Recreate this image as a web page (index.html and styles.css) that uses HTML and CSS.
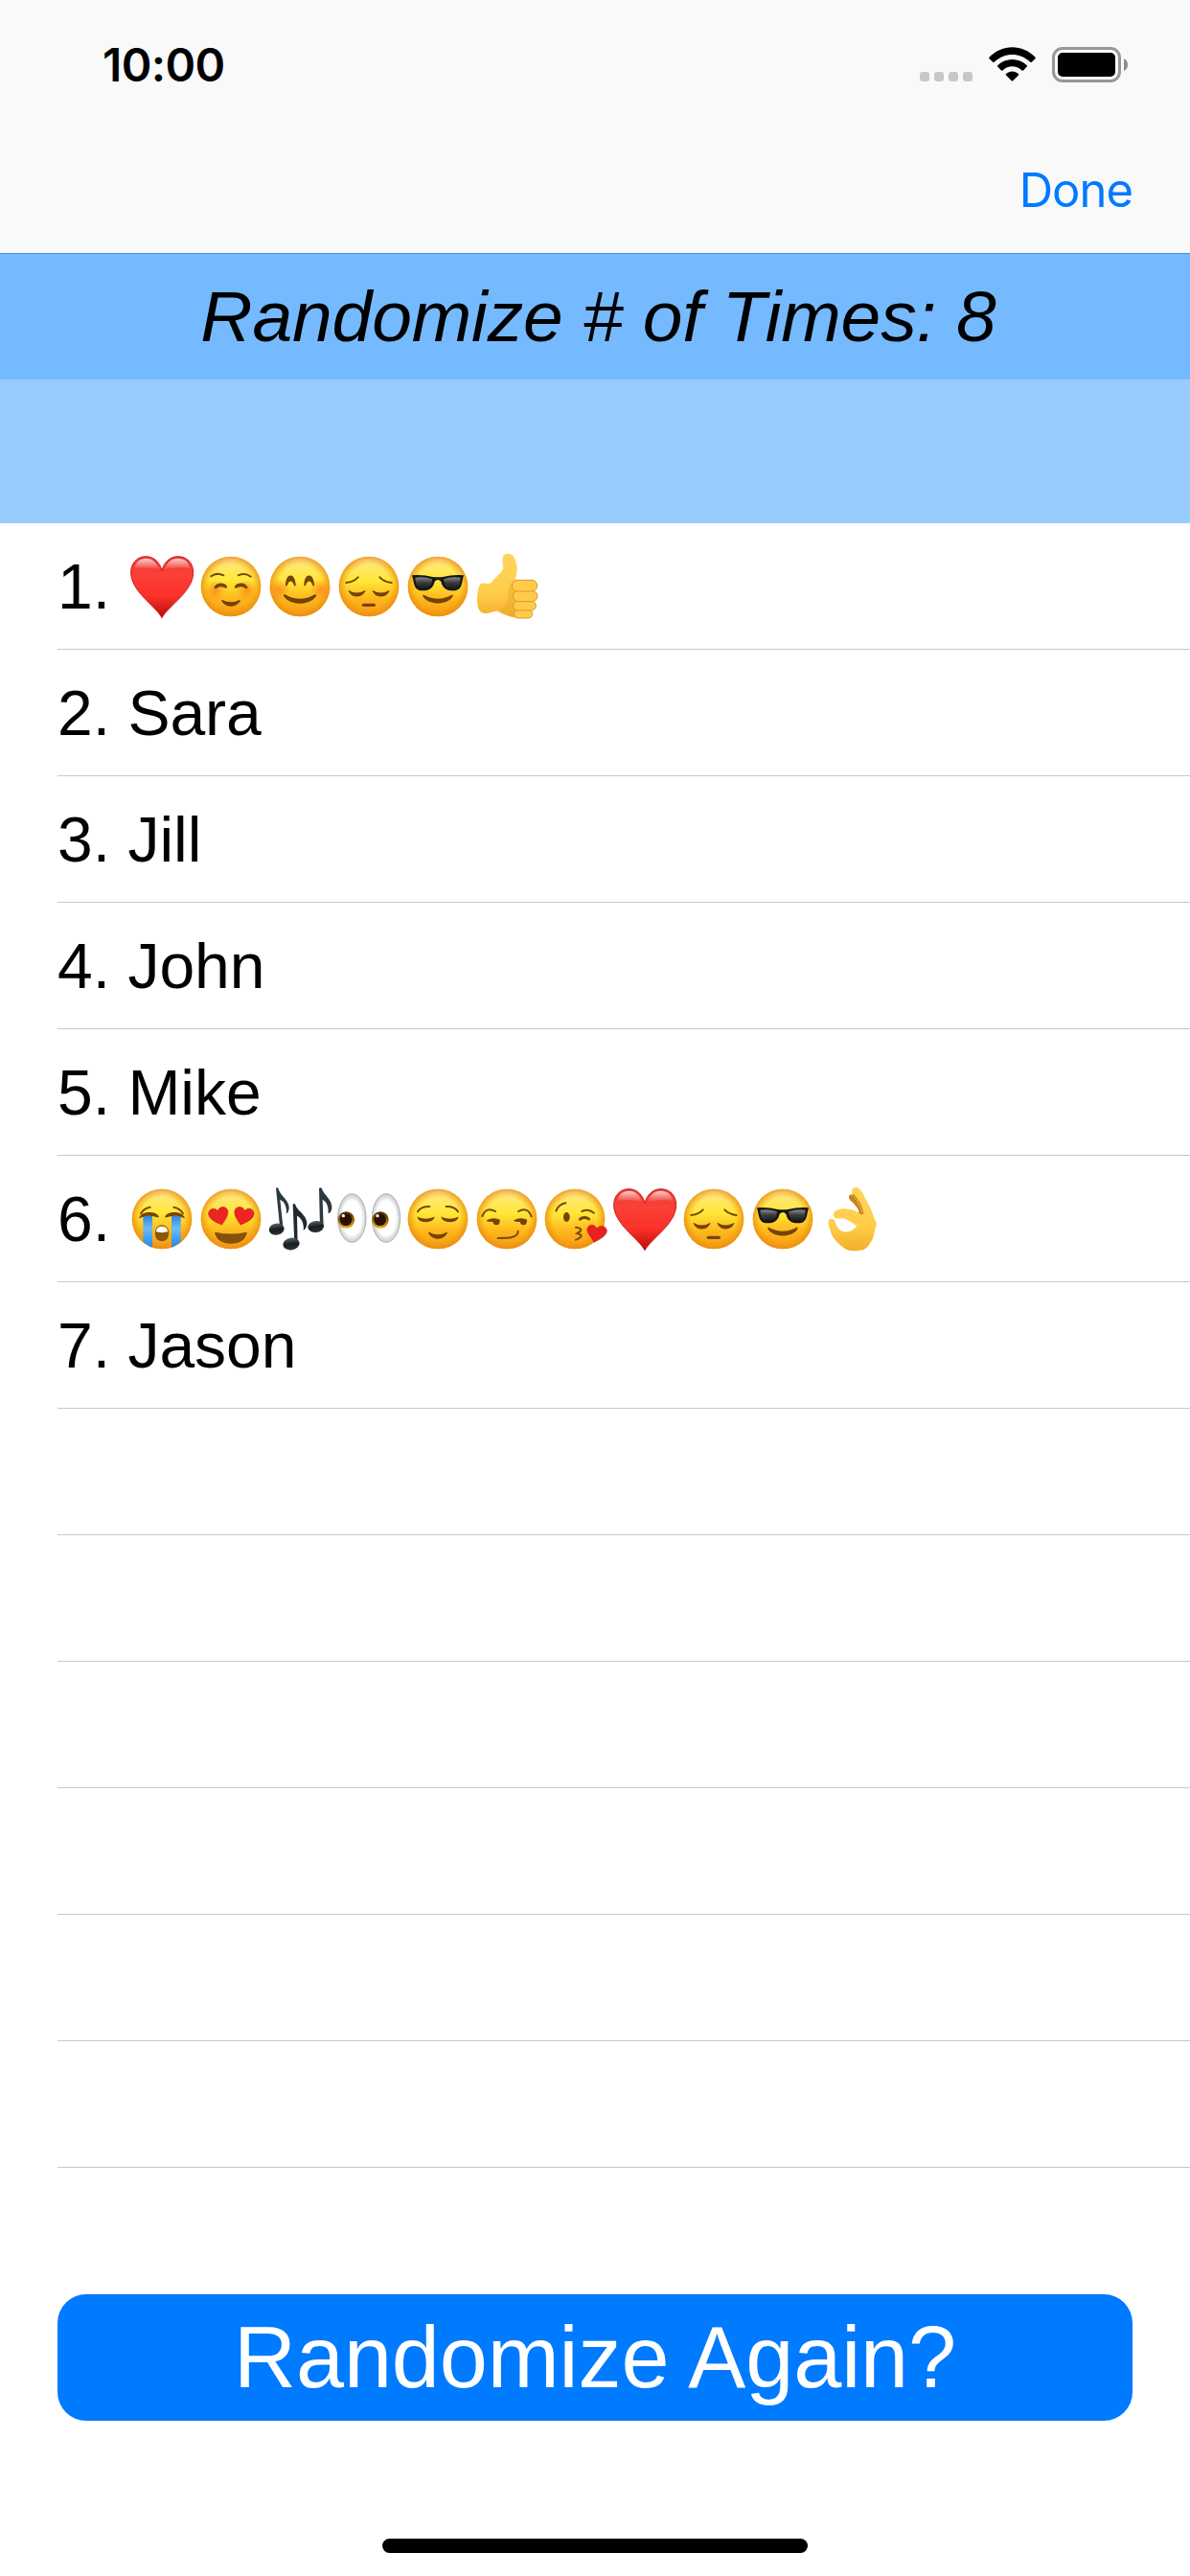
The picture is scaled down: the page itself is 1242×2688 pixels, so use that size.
FILE: index.html
```html
<!DOCTYPE html>
<html lang="en">

<head>
    <meta charset="UTF-8">
    <meta name="viewport" content="width=device-width, initial-scale=1.0">
    <title>Randomize</title>
    <link rel="stylesheet" href="styles.css">
</head>

<body>
    <!-- shared emoji shapes -->
    <svg class="defs" width="0" height="0">
        <defs>
            <linearGradient id="faceFill" x1="0" y1="0" x2="0" y2="1">
                <stop offset="0" stop-color="#fff6c0" />
                <stop offset="0.14" stop-color="#ffe870" />
                <stop offset="0.4" stop-color="#ffe838" />
                <stop offset="0.7" stop-color="#fdb81c" />
                <stop offset="1" stop-color="#f69a16" />
            </linearGradient>
            <radialGradient id="faceEdge">
                <stop offset="0.72" stop-color="#f39a12" stop-opacity="0" />
                <stop offset="1" stop-color="#e98a10" stop-opacity="0.8" />
            </radialGradient>
            <radialGradient id="cheek">
                <stop offset="0" stop-color="#ff7a1a" stop-opacity="0.75" />
                <stop offset="1" stop-color="#ff8a1a" stop-opacity="0" />
            </radialGradient>
            <linearGradient id="heartFill" x1="0" y1="0" x2="0" y2="1">
                <stop offset="0" stop-color="#ea3a34" />
                <stop offset="0.3" stop-color="#fb4038" />
                <stop offset="0.65" stop-color="#fb3128" />
                <stop offset="1" stop-color="#b80a0a" />
            </linearGradient>
            <linearGradient id="shine" x1="0" y1="0" x2="0" y2="1">
                <stop offset="0" stop-color="#fff" stop-opacity="0.75" />
                <stop offset="1" stop-color="#fff" stop-opacity="0" />
            </linearGradient>
            <linearGradient id="handFill" x1="0" y1="0" x2="0" y2="1">
                <stop offset="0" stop-color="#ffd45c" />
                <stop offset="0.6" stop-color="#ffcd4a" />
                <stop offset="1" stop-color="#f3ae2a" />
            </linearGradient>
            <linearGradient id="tear" x1="0" y1="0" x2="0" y2="1">
                <stop offset="0" stop-color="#2f86dc" />
                <stop offset="0.4" stop-color="#6cbcf5" />
                <stop offset="1" stop-color="#2585ec" />
            </linearGradient>
            <linearGradient id="lens" x1="0" y1="0" x2="0" y2="1">
                <stop offset="0" stop-color="#8a8a8a" />
                <stop offset="0.45" stop-color="#3c3c3c" />
                <stop offset="1" stop-color="#161616" />
            </linearGradient>
            <radialGradient id="eyeball">
                <stop offset="0.7" stop-color="#fff" />
                <stop offset="1" stop-color="#c9c9cb" />
            </radialGradient>
            <linearGradient id="iris" x1="0" y1="0" x2="0" y2="1">
                <stop offset="0" stop-color="#4a2800" />
                <stop offset="0.5" stop-color="#9a6206" />
                <stop offset="1" stop-color="#e9b414" />
            </linearGradient>
            <linearGradient id="noteHead" x1="0" y1="0" x2="0" y2="1">
                <stop offset="0" stop-color="#56656c" />
                <stop offset="0.5" stop-color="#171c1f" />
                <stop offset="1" stop-color="#2c363b" />
            </linearGradient>

            <symbol id="face" viewBox="0 0 216 216">
                <circle cx="108" cy="108" r="94" fill="url(#faceFill)" />
                <circle cx="108" cy="108" r="94" fill="url(#faceEdge)" />
            </symbol>

            <symbol id="heart" viewBox="0 0 216 216">
                <path d="M108 206C88 168 11 124 11 64C11 34 31 14 58 14C84 14 102 34 108 58C114 34 132 14 158 14C186 14 206 34 206 64C206 124 128 168 108 206Z" fill="url(#heartFill)" stroke="#c91a18" stroke-width="3" />
                <path d="M22 52C26 30 40 20 58 20C78 20 94 34 100 56C76 48 44 46 22 52Z" fill="url(#shine)" />
                <path d="M116 56C122 34 138 20 158 20C178 20 192 30 196 52C172 46 140 48 116 56Z" fill="url(#shine)" />
            </symbol>

            <symbol id="blush" viewBox="0 0 216 216">
                <use href="#face" width="216" height="216" />
                <circle cx="58" cy="120" r="34" fill="url(#cheek)" />
                <circle cx="158" cy="120" r="34" fill="url(#cheek)" />
                <g class="line">
                    <path d="M46 76Q62 63 85 73" />
                    <path d="M131 73Q153 63 170 77" />
                </g>
                <path class="ink" d="M56 110C62 94 92 94 96 109C97 114 93 114 88 112C80 108 72 108 64 113C58 116 55 114 56 110Z" />
                <path class="ink" d="M160 110C154 94 124 94 120 109C119 114 123 114 128 112C136 108 144 108 152 113C158 116 161 114 160 110Z" />
                <path class="ink" d="M81 150Q108 164 135 150C138 149 138 153 136 156C122 175 94 175 80 156C78 153 78 149 81 150Z" />
            </symbol>

            <symbol id="smile" viewBox="0 0 216 216">
                <use href="#face" width="216" height="216" />
                <circle cx="42" cy="118" r="36" fill="url(#cheek)" />
                <circle cx="174" cy="118" r="36" fill="url(#cheek)" />
                <path class="ink" d="M63 103C64 64 93 64 95 103C95 109 91 108 89 103C84 88 74 88 69 103C67 108 63 108 63 103Z" />
                <path class="ink" d="M121 103C122 64 151 64 153 103C153 109 149 108 147 103C142 88 132 88 127 103C125 108 121 108 121 103Z" />
                <path class="ink" d="M61 133Q108 160 155 133C160 131 160 137 157 141C136 168 80 168 59 141C56 137 56 131 61 133Z" />
            </symbol>

            <symbol id="pensive" viewBox="0 0 216 216">
                <use href="#face" width="216" height="216" />
                <g class="line">
                    <path d="M37 96Q62 93 74 79" />
                    <path d="M142 79Q154 93 179 96" />
                </g>
                <path class="ink" d="M45 120Q70 135 96 120C98 119 97 123 95 126C84 144 56 144 46 126C44 122 43 119 45 120Z" />
                <path class="ink" d="M120 120Q146 135 171 120C173 119 172 122 170 126C160 144 132 144 121 126C119 123 118 119 120 120Z" />
                <rect x="86" y="161" width="43" height="10" rx="5" fill="#7a4406" />
            </symbol>

            <symbol id="cool" viewBox="0 0 216 216">
                <use href="#face" width="216" height="216" />
                <path d="M27 73Q60 70 92 78Q108 80 124 78Q156 70 189 73L186 84C182 108 178 121 156 121C132 121 122 110 118 92Q108 82 98 92C94 110 84 121 60 121C38 121 34 108 30 84Z" fill="#151515" />
                <path d="M37 80Q66 76 90 85C89 106 80 116 61 116C43 116 39 106 37 80Z" fill="url(#lens)" />
                <path d="M179 80Q150 76 126 85C127 106 136 116 155 116C173 116 177 106 179 80Z" fill="url(#lens)" />
                <path class="ink" d="M64 134Q108 158 152 134C156 133 156 138 153 142C134 167 82 167 63 142C60 138 60 133 64 134Z" />
            </symbol>

            <symbol id="thumb" viewBox="0 0 216 216">
                <path d="M28 98C36 95 48 102 57 98C68 84 84 72 96 54C98 42 92 30 95 18C98 6 114 2 124 9C136 18 140 42 140 58C139 72 135 80 134 88L150 92L150 206C124 208 96 194 82 184C66 184 50 196 34 191C18 188 15 166 15 148C15 128 20 100 28 98Z" fill="url(#handFill)" />
                <path d="M74 186C104 180 112 152 112 126C114 108 120 94 136 88L140 204C116 204 92 194 74 186Z" fill="#eaa62a" opacity="0.45" />
                <g fill="#ffcb49" stroke="#dc982a" stroke-width="3">
                    <rect x="131" y="180" width="57" height="27" rx="13" />
                    <rect x="128" y="153" width="71" height="30" rx="15" />
                    <rect x="127" y="121" width="77" height="34" rx="17" />
                    <rect x="124" y="88" width="79" height="35" rx="17" />
                </g>
            </symbol>

            <symbol id="sob" viewBox="0 0 216 216">
                <use href="#face" width="216" height="216" />
                <path d="M49 98H78V197C67 192 58 187 49 180Z" fill="url(#tear)" />
                <path d="M138 98H167V180C158 187 149 192 138 197Z" fill="url(#tear)" />
                <g class="line">
                    <path d="M42 91Q50 75 71 71" />
                    <path d="M145 71Q166 75 174 91" />
                </g>
                <path class="ink" d="M37 103C46 82 88 82 98 99C100 104 95 104 90 102C76 97 58 97 46 102C40 106 36 107 37 103Z" />
                <path class="ink" d="M179 103C170 82 128 82 118 99C116 104 121 104 126 102C140 97 158 97 170 102C176 106 180 107 179 103Z" />
                <rect x="87" y="127" width="42" height="51" rx="21" fill="#8a5608" />
                <path d="M90 148C90 137 97 131 108 131C119 131 126 137 126 148Q108 153 90 148Z" fill="#fff" />
            </symbol>

            <symbol id="loveEyes" viewBox="0 0 216 216">
                <use href="#face" width="216" height="216" />
                <g fill="#ed2422" stroke="#c9161a" stroke-width="2">
                    <path d="M80 126C62 119 37 108 38 90C39 76 59 69 67 84C70 67 94 66 98 82C101 98 88 112 80 126Z" />
                    <path d="M138 126C156 119 181 108 180 90C179 76 159 69 151 84C148 67 124 66 120 82C117 98 130 112 138 126Z" />
                </g>
                <path d="M59 149Q108 160 157 149C161 149 155 165 148 172C128 190 88 190 68 172C61 165 55 149 59 149Z" fill="#84500a" />
            </symbol>

            <symbol id="notes" viewBox="0 0 216 216">
                <path d="M33 12C37 8 40 10 41 14C46 34 76 50 74 74C73 84 70 90 65 91C69 68 56 50 46 48L56 140H46Z" fill="#2c3940" />
                <ellipse cx="35" cy="140" rx="24" ry="18" transform="rotate(-8 35 140)" fill="url(#noteHead)" />
                <path d="M86 62C90 58 93 60 94 64C100 84 131 96 130 124C129 134 124 142 119 143C122 120 110 102 99 98L101 188H91Z" fill="#1f292e" />
                <ellipse cx="81" cy="186" rx="26" ry="19" transform="rotate(-8 81 186)" fill="url(#noteHead)" />
                <path d="M168 12C172 8 176 10 177 14C184 34 210 46 208 74C207 84 202 90 196 91C200 68 188 50 179 48L182 134H171Z" fill="#2c3940" />
                <ellipse cx="158" cy="132" rx="25" ry="18" transform="rotate(-8 158 132)" fill="url(#noteHead)" />
            </symbol>

            <symbol id="eyes" viewBox="0 0 216 216">
                <ellipse cx="55" cy="105" rx="44" ry="76" fill="url(#eyeball)" stroke="#b4b4b6" stroke-width="3" />
                <ellipse cx="162" cy="105" rx="44" ry="76" fill="url(#eyeball)" stroke="#b4b4b6" stroke-width="3" />
                <circle cx="37" cy="111" r="26" fill="url(#iris)" />
                <circle cx="144" cy="111" r="26" fill="url(#iris)" />
                <circle cx="36" cy="110" r="19" fill="#2b1200" />
                <circle cx="143" cy="110" r="19" fill="#2b1200" />
                <circle cx="28" cy="98" r="5" fill="#fff" />
                <circle cx="135" cy="98" r="5" fill="#fff" />
            </symbol>

            <symbol id="relieved" viewBox="0 0 216 216">
                <use href="#face" width="216" height="216" />
                <g class="line">
                    <path d="M45 85Q55 68 82 69" />
                    <path d="M134 69Q161 68 171 85" />
                </g>
                <path class="ink" d="M45 101Q70 114 96 101C98 100 97 105 95 108C84 121 56 121 46 108C44 104 43 100 45 101Z" />
                <path class="ink" d="M120 101Q146 114 171 101C173 100 172 104 170 108C160 121 132 121 121 108C119 105 118 100 120 101Z" />
                <path class="ink" d="M81 149Q108 164 135 149C138 148 138 152 136 155C122 175 94 175 80 155C78 152 78 148 81 149Z" />
            </symbol>

            <symbol id="smirk" viewBox="0 0 216 216">
                <use href="#face" width="216" height="216" />
                <g class="line">
                    <path d="M31 99Q44 68 72 84" />
                    <path d="M144 84Q172 68 185 100" />
                    <path d="M80 168C112 168 144 168 143 146" />
                </g>
                <path class="ink" d="M45 112Q66 100 86 110C87 122 82 127 75 127C68 127 66 123 64 117Q54 118 45 115Z" />
                <path class="ink" d="M130 112Q151 100 171 110C172 122 167 127 160 127C153 127 151 123 149 117Q139 118 130 115Z" />
            </symbol>

            <symbol id="kiss" viewBox="0 0 216 216">
                <use href="#face" x="-3" width="216" height="216" />
                <g class="line">
                    <path d="M46 83Q54 62 76 58" />
                    <path d="M127 84Q147 74 165 89" />
                    <path d="M108 134Q138 138 112 153Q140 160 108 173" />
                </g>
                <ellipse cx="79" cy="102" rx="10" ry="15" fill="#754306" />
                <path class="ink" d="M117 108C122 96 148 96 153 108C154 113 150 113 146 111C138 107 132 107 125 111C120 114 116 113 117 108Z" />
                <path d="M165 181C158 166 141 152 144 138C148 123 168 122 173 139C182 126 203 128 205 145C205 160 182 172 165 181Z" fill="#e8211f" stroke="#c9161a" stroke-width="2" />
            </symbol>

            <symbol id="okHand" viewBox="0 0 216 216">
                <path d="M112 12C120 6 128 8 132 14C146 28 150 44 157 56C168 72 174 94 180 110C188 122 186 128 181 140C176 156 178 168 166 182C158 196 148 206 132 206C108 210 92 208 78 194C60 180 46 166 41 144C36 132 33 122 35 114C38 104 54 106 56 116C60 134 72 148 86 148C104 150 116 140 124 130C108 120 92 106 78 106C66 108 54 108 51 98C48 84 64 78 80 76C98 76 116 78 130 90C134 78 116 60 104 50C94 38 100 30 110 32C108 24 106 18 112 12Z" fill="url(#handFill)" />
                <path d="M104 50C94 38 100 30 110 32C122 44 134 66 142 96L130 90C134 78 116 60 104 50Z" fill="#c88220" />
                <path d="M112 30C126 46 140 66 143 92" fill="none" stroke="#a8660f" stroke-width="3" />
            </symbol>
        </defs>
    </svg>

    <div class="screen">
        <div class="navbar">
            <div class="status">
                <span class="time">10:00</span>
                <div class="indicators">
                    <div class="dots"><i></i><i></i><i></i><i></i></div>
                    <svg class="wifi" viewBox="0 0 49 36">
                        <path d="M0.5 10.8C14 -3.2 35 -3.2 48.5 10.8Q49 11.5 48.5 12.2L44.8 15.8Q44 16.4 43.3 15.8C32.5 5.3 16.5 5.3 5.7 15.8Q5 16.4 4.2 15.8L0.5 12.2Q0 11.5 0.5 10.8Z" />
                        <path d="M9.2 19.2C17.8 10.8 31.2 10.8 39.8 19.2Q40.3 19.9 39.8 20.6L36 24.4Q35.2 25 34.5 24.4C28.5 19 20.5 19 14.5 24.4Q13.8 25 13 24.4L9.2 20.6Q8.7 19.9 9.2 19.2Z" />
                        <path d="M18 28C21.8 24.5 27.2 24.5 31 28Q31.7 28.8 31 29.5L25.2 35.3Q24.5 36 23.8 35.3L18 29.5Q17.3 28.8 18 28Z" />
                    </svg>
                    <svg class="battery" viewBox="0 0 79 37">
                        <rect x="1.5" y="1.5" width="69" height="34" rx="9.5" fill="none" stroke="#979797" stroke-width="3" />
                        <rect x="6" y="6" width="60" height="25" rx="5" />
                        <path d="M75 12Q79 14 79 18.5Q79 23 75 25Z" fill="#8a8a8a" />
                    </svg>
                </div>
            </div>
            <div class="actions">
                <a class="done">Done</a>
            </div>
        </div>

        <div class="title">Randomize # of Times: 8</div>
        <div class="spacer"></div>

        <div class="list">
            <div class="row">
                <span class="label">1. </span>
                <svg class="emoji" role="img" aria-label="❤️"><use href="#heart" /></svg>
                <svg class="emoji" role="img" aria-label="☺️"><use href="#blush" /></svg>
                <svg class="emoji" role="img" aria-label="😊"><use href="#smile" /></svg>
                <svg class="emoji" role="img" aria-label="😔"><use href="#pensive" /></svg>
                <svg class="emoji" role="img" aria-label="😎"><use href="#cool" /></svg>
                <svg class="emoji" role="img" aria-label="👍"><use href="#thumb" /></svg>
            </div>
            <div class="row"><span class="label">2. Sara</span></div>
            <div class="row"><span class="label">3. Jill</span></div>
            <div class="row"><span class="label">4. John</span></div>
            <div class="row"><span class="label">5. Mike</span></div>
            <div class="row">
                <span class="label">6. </span>
                <svg class="emoji" role="img" aria-label="😭"><use href="#sob" /></svg>
                <svg class="emoji" role="img" aria-label="😍"><use href="#loveEyes" /></svg>
                <svg class="emoji" role="img" aria-label="🎶"><use href="#notes" /></svg>
                <svg class="emoji" role="img" aria-label="👀"><use href="#eyes" /></svg>
                <svg class="emoji" role="img" aria-label="😌"><use href="#relieved" /></svg>
                <svg class="emoji" role="img" aria-label="😏"><use href="#smirk" /></svg>
                <svg class="emoji" role="img" aria-label="😘"><use href="#kiss" /></svg>
                <svg class="emoji" role="img" aria-label="❤️"><use href="#heart" /></svg>
                <svg class="emoji" role="img" aria-label="😔"><use href="#pensive" /></svg>
                <svg class="emoji" role="img" aria-label="😎"><use href="#cool" /></svg>
                <svg class="emoji" role="img" aria-label="👌"><use href="#okHand" /></svg>
            </div>
            <div class="row"><span class="label">7. Jason</span></div>
            <div class="row"></div>
            <div class="row"></div>
            <div class="row"></div>
            <div class="row"></div>
            <div class="row"></div>
            <div class="row"></div>
        </div>

        <button class="again">Randomize Again?</button>
        <div class="home-bar"></div>
    </div>
</body>

</html>
```

FILE: styles.css
```css
* {
    box-sizing: border-box;
}

body {
    margin: 0;
    background: #fff;
    color: #000;
    font-family: "Liberation Sans", Helvetica, Arial, sans-serif;
}

.defs {
    display: block;
}

.screen {
    width: 1242px;
    height: 2688px;
    display: flex;
    flex-direction: column;
    overflow: hidden;
}

/* top bar */
.navbar {
    height: 264px;
    background: #f9f9f9;
    font-family: Inter, sans-serif;
}

.status {
    height: 132px;
    display: flex;
    justify-content: space-between;
    padding: 0 65px 0 107px;
}

.time {
    margin-top: 38px;
    font-size: 48px;
    line-height: 60px;
    font-weight: 600;
    letter-spacing: -0.6px;
}

.indicators {
    display: flex;
    align-items: flex-start;
    margin-top: 49px;
}

.dots {
    display: flex;
    gap: 5px;
    margin: 26px 17px 0 0;
}

.dots i {
    width: 10px;
    height: 10px;
    border-radius: 3px;
    background: #c7c7c7;
}

.wifi {
    width: 49px;
    height: 36px;
    margin-right: 17px;
}

.battery {
    width: 79px;
    height: 37px;
}

.actions {
    height: 132px;
    display: flex;
    justify-content: flex-end;
    align-items: center;
    padding: 2px 60px 0 0;
}

.done {
    color: #007aff;
    font-size: 49px;
    line-height: 60px;
    letter-spacing: -1px;
}

.title {
    height: 132px;
    padding-left: 7px;
    border-top: 1px solid #4c8fcb;
    background: #75baff;
    font-size: 75px;
    line-height: 131px;
    font-style: italic;
    letter-spacing: -0.12px;
    text-align: center;
}

.spacer {
    height: 150px;
    background: #98ccff;
}

/* names */
.list {
    padding-left: 60px;
}

.row {
    height: 132px;
    display: flex;
    align-items: center;
    border-bottom: 1px solid #c8c7cc;
}

.label {
    font-size: 66px;
    white-space: pre;
}

.emoji {
    width: 72px;
    height: 72px;
    flex: none;
}

.line {
    fill: none;
    stroke: #7a4a06;
    stroke-width: 6;
    stroke-linecap: round;
}

.ink {
    fill: #754306;
}

.again {
    height: 132px;
    margin: 132px 60px 0;
    padding: 0;
    border: none;
    border-radius: 30px;
    background: #007aff;
    color: #fff;
    font-family: inherit;
    font-size: 90px;
    letter-spacing: -0.1px;
}

.home-bar {
    width: 444px;
    height: 15px;
    margin: 123px auto 0;
    border-radius: 8px;
    background: #000;
}
```
